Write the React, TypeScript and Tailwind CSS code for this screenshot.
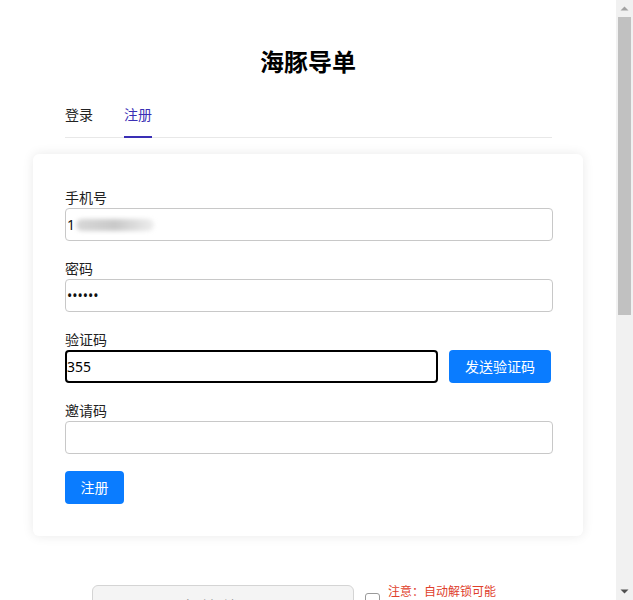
import React from "react";

const font = {
  fontFamily: '"Noto Sans", "Noto Sans CJK SC", sans-serif',
};

function Field({ label, children }: { label: string; children: React.ReactNode }) {
  return (
    <div className="mb-[17px]">
      <div className="text-[14px] leading-[21px] text-[#222]">{label}</div>
      {children}
    </div>
  );
}

function Scrollbar() {
  return (
    <div className="sticky top-0 flex h-[600px] w-[17px] shrink-0 flex-col bg-[#f1f1f1]">
      <div className="flex h-[17px] items-center justify-center">
        <svg width="9" height="5" viewBox="0 0 9 5">
          <polygon points="0.5,4.5 4.5,0.5 8.5,4.5" fill="#a3a3a3" />
        </svg>
      </div>
      <div className="mx-[2px] h-[298px] bg-[#c1c1c1]" />
      <div className="flex-1" />
      <div className="flex h-[17px] items-center justify-center">
        <svg width="9" height="5" viewBox="0 0 9 5">
          <polygon points="0.5,0.5 8.5,0.5 4.5,4.5" fill="#505050" />
        </svg>
      </div>
    </div>
  );
}

export default function App() {
  return (
    <div className="flex items-start bg-white text-[#111]" style={font}>
      <div className="min-h-[1140px] flex-1">
        <div className="mx-auto w-[550px] pt-[46px]">
          <h1 className="text-center text-[24px] font-bold leading-[32px] text-black">海豚导单</h1>
          <div className="ml-[32px] mr-[31px] mt-[26px] flex border-b border-[#e8e8e8] text-[14px]">
            <div className="pb-[11px] leading-[22px] text-[#222]">登录</div>
            <div className="mb-[-1px] ml-[31px] border-b-2 border-[#3a2fb5] pb-[9px] leading-[22px] text-[#3a2fb5]">注册</div>
          </div>
          <div className="mt-[16px] rounded-[6px] bg-white pb-[32px] pl-[32px] pr-[30px] pt-[33px] shadow-[0_0_12px_rgba(0,0,0,0.09)]">
            <Field label="手机号">
              <div className="flex h-[33px] items-center rounded-[4px] border border-[#c8c8c8] pl-[1px] text-[14px]">
                <span>1</span>
                <span className="ml-[1px] h-[12px] w-[78px] rounded-full bg-gradient-to-r from-[#d8d8d8] via-[#c9c9c9] to-[#eeeeee] blur-[2px]" />
              </div>
            </Field>
            <Field label="密码">
              <input
                type="password"
                readOnly
                value="123456"
                className="block h-[33px] w-full rounded-[4px] border border-[#c8c8c8] px-[1px] text-[14px] outline-none"
              />
            </Field>
            <Field label="验证码">
              <div className="flex gap-[11px] pr-[2px]">
                <input
                  readOnly
                  value="355"
                  className="block h-[33px] flex-1 rounded-[4px] border-2 border-black px-0 text-[14px] text-black outline-none"
                />
                <button className="h-[33px] w-[102px] rounded-[4px] bg-[#0a7cff] text-[14px] text-white">发送验证码</button>
              </div>
            </Field>
            <Field label="邀请码">
              <input
                readOnly
                value=""
                className="block h-[33px] w-full rounded-[4px] border border-[#c8c8c8] px-[1px] text-[14px] outline-none"
              />
            </Field>
            <button className="h-[33px] w-[59px] rounded-[4px] bg-[#0a7cff] text-[14px] text-white">注册</button>
          </div>
          <div className="mt-[49px] flex items-start pl-[59px]">
            <button className="h-[40px] w-[262px] rounded-[6px] border border-[#d4d4d4] bg-[#f4f4f4] text-[14px] text-[#9a9a9a]">自动解锁显示</button>
            <div className="ml-[11px] mt-[8px] h-[15px] w-[15px] rounded-[3px] border border-[#9a9a9a] bg-white" />
            <div className="ml-[8px] mt-[-2px] w-[110px] text-[12px] leading-[18px] text-[#e0402b]">
              注意：自动解锁可能会导致账号异常，请谨慎使用。
            </div>
          </div>
        </div>
      </div>
      <Scrollbar />
    </div>
  );
}
